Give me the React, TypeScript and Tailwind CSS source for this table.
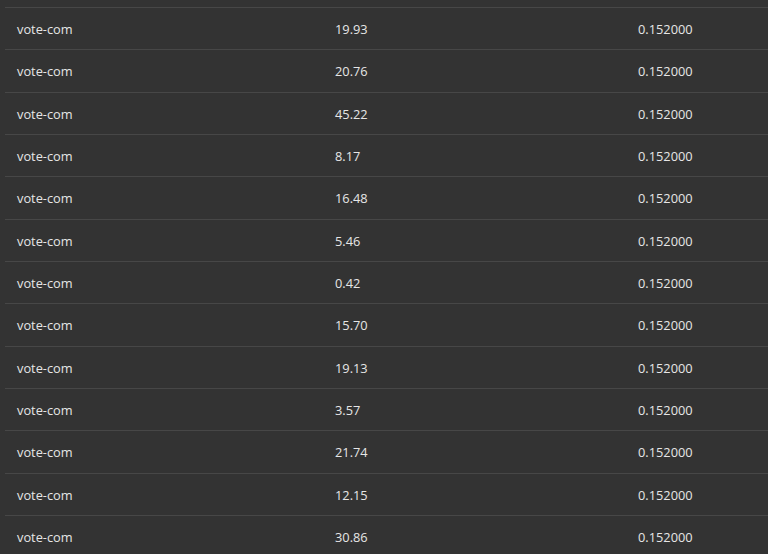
import React from 'react';

const VALUES = ['19.93', '20.76', '45.22', '8.17', '16.48', '5.46', '0.42', '15.70', '19.13', '3.57', '21.74', '12.15', '30.86'];

export default function App() {
  return (
    <div
      className="w-[768px] h-[554px] overflow-hidden bg-[#333333] text-[12.8px] text-[#e6e6e6]"
      style={{ fontFamily: '"Open Sans", "Noto Sans", sans-serif' }}
    >
      <div className="h-[7px]" />
      <div className="ml-[5px]">
        {VALUES.map((v, i) => (
          <div
            key={i}
            className="grid grid-cols-[318px_303px_1fr] items-center h-[42.33px] pt-[2px] border-t border-[#474747]"
          >
            <div className="pl-3">vote-com</div>
            <div className="pl-3">{v}</div>
            <div className="pl-3">0.152000</div>
          </div>
        ))}
      </div>
    </div>
  );
}
